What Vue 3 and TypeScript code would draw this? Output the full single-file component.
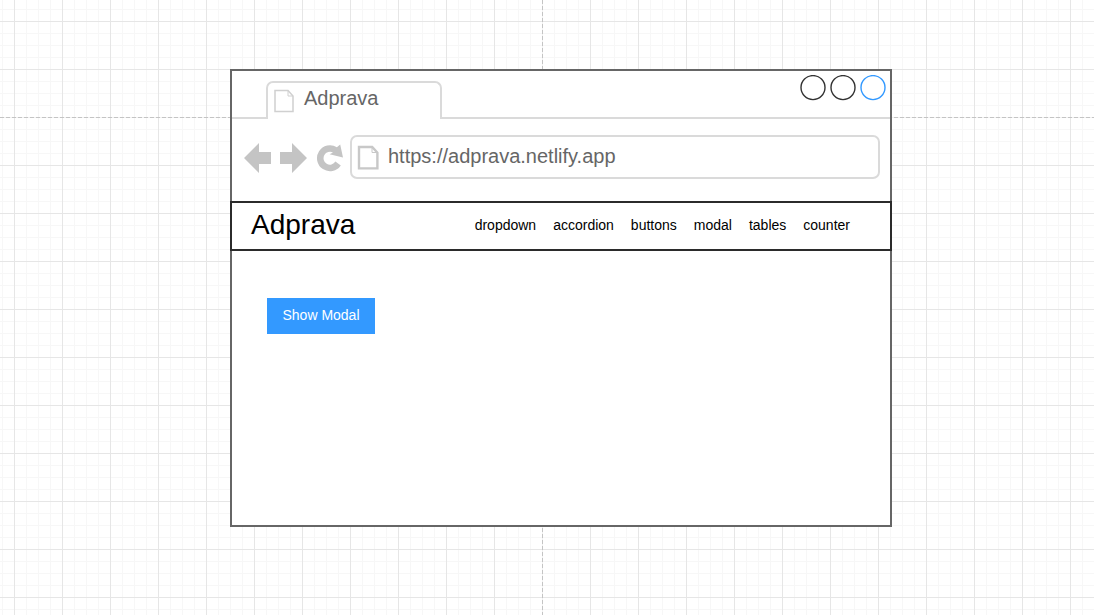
<script setup lang="ts">
import { ref } from 'vue'

interface NavLink {
  label: string
  href: string
}

const address = ref<string>('https://adprava.netlify.app')

const links: NavLink[] = ['dropdown', 'accordion', 'buttons', 'modal', 'tables', 'counter'].map(
  (label) => ({ label, href: `#${label}` }),
)

const controls = [
  { name: 'Minimize', accent: false },
  { name: 'Maximize', accent: false },
  { name: 'Close', accent: true },
]
</script>

<template>
  <div class="canvas">
    <div class="browser">
      <div class="tab-strip">
        <button class="tab" type="button">
          <svg class="tab-icon" viewBox="0 0 20 24" aria-hidden="true">
            <path d="M1 1.5H14L19 7V22.5H1Z" />
            <path class="fold" d="M14 1.5V7H19" />
          </svg>
          <span>Adprava</span>
        </button>
        <div class="controls">
          <button
            v-for="control in controls"
            :key="control.name"
            class="control"
            :class="{ accent: control.accent }"
            type="button"
            :aria-label="control.name"
          >
            <svg viewBox="0 0 26 26" aria-hidden="true">
              <circle cx="13" cy="12.6" r="12" />
            </svg>
          </button>
        </div>
      </div>

      <div class="toolbar">
        <button class="tool" type="button" aria-label="Back">
          <svg viewBox="0 0 27 30" aria-hidden="true">
            <path d="M0 15L15 0V9H27V21H15V30Z" />
          </svg>
        </button>
        <button class="tool" type="button" aria-label="Forward">
          <svg viewBox="0 0 27 30" aria-hidden="true">
            <path d="M27 15L12 0V9H0V21H12V30Z" />
          </svg>
        </button>
        <button class="tool" type="button" aria-label="Reload">
          <svg viewBox="0 0 27 30" aria-hidden="true">
            <path
              d="M20.9 4.2L24.2 1.4L27 14.4L13.6 11.2L17 9.6A6.4 6.4 0 1 0 19.4 18.6L24.8 22.4A13 13 0 1 1 20.9 4.2Z"
            />
          </svg>
        </button>
        <label class="address">
          <svg class="address-icon" viewBox="0 0 22 25" aria-hidden="true">
            <path d="M2 2H15.2L20.4 7.6V23.4H2Z" />
            <path class="fold" d="M15 2V7.5H20" />
          </svg>
          <input v-model="address" type="text" aria-label="Address" spellcheck="false" />
        </label>
      </div>

      <nav class="site-nav">
        <a class="brand" href="#">Adprava</a>
        <div class="links">
          <a v-for="link in links" :key="link.label" :href="link.href">{{ link.label }}</a>
        </div>
      </nav>

      <main class="content">
        <button class="primary" type="button">Show Modal</button>
      </main>
    </div>
  </div>
</template>

<style>
body {
  margin: 0;
}
</style>

<style scoped>
.canvas,
.canvas * {
  box-sizing: border-box;
}

.canvas {
  display: flex;
  min-height: 100vh;
  padding: 69px 202px 88px 230px;
  font-family: 'Liberation Sans', Arial, sans-serif;
  background-color: #fff;
  background-image:
    repeating-linear-gradient(90deg, #c4c4c4 0 4px, #f0f0f0 4px 6px),
    repeating-linear-gradient(180deg, #c4c4c4 0 4px, #f0f0f0 4px 6px),
    linear-gradient(90deg, #e6e6e6 1px, transparent 1px),
    linear-gradient(180deg, #e6e6e6 1px, transparent 1px),
    linear-gradient(90deg, #f7f7f7 1px, transparent 1px),
    linear-gradient(180deg, #f7f7f7 1px, transparent 1px);
  background-size:
    100% 1px,
    1px 100%,
    48px 48px,
    48px 48px,
    12px 12px,
    12px 12px;
  background-position:
    0 117px,
    542px 0,
    14px 21px,
    14px 21px,
    2px 9px,
    2px 9px;
  background-repeat: no-repeat, no-repeat, repeat, repeat, repeat, repeat;
}

button {
  margin: 0;
  padding: 0;
  border: 0;
  background: none;
  font: inherit;
}

svg {
  display: block;
}

.browser {
  display: flex;
  flex: 1;
  flex-direction: column;
  min-width: 0;
  border: 2px solid #666;
  background: #fff;
}

.tab-strip {
  display: flex;
  align-items: flex-end;
  justify-content: space-between;
  height: 48px;
  padding: 0 4px 0 34px;
  box-shadow: inset 0 -2px #dadada;
}

.tab {
  display: flex;
  gap: 10px;
  width: 176px;
  height: 38px;
  padding: 6px;
  border: 2px solid #dadada;
  border-bottom: 0;
  border-radius: 7px 7px 0 0;
  background: #fff;
  color: #666;
  font-size: 20px;
  line-height: 18px;
}

.tab-icon {
  width: 20px;
  height: 24px;
  fill: none;
  stroke: #d0d0d0;
  stroke-width: 1.5;
}

.tab-icon .fold {
  stroke-width: 1;
}

.controls {
  display: flex;
  align-self: flex-start;
  gap: 4px;
  padding-top: 4px;
}

.control svg {
  width: 26px;
  height: 26px;
  fill: none;
  stroke: #333;
  stroke-width: 1.4;
}

.control.accent svg {
  stroke: #3399ff;
}

.toolbar {
  display: flex;
  align-items: center;
  gap: 7px;
  padding: 16px 10px 22px 12px;
}

.tools {
  display: flex;
}

.tool {
  padding-top: 2px;
}

.tool + .tool {
  padding-left: 2px;
}

.tool svg {
  width: 27px;
  height: 30px;
  fill: #c4c4c4;
}

.address {
  display: flex;
  flex: 1;
  align-items: center;
  gap: 9px;
  height: 44px;
  padding: 0 5px;
  border: 2px solid #dadada;
  border-radius: 7px;
}

.address-icon {
  flex: none;
  width: 22px;
  height: 25px;
  fill: none;
  stroke: #c8c8c8;
  stroke-width: 2.4;
}

.address-icon .fold {
  stroke-width: 1;
}

.address input {
  flex: 1;
  min-width: 0;
  margin: 0;
  padding: 0 0 2px;
  border: 0;
  outline: 0;
  background: none;
  color: #666;
  font: inherit;
  font-size: 20px;
  line-height: 24px;
}

.site-nav {
  display: flex;
  align-items: center;
  justify-content: space-between;
  height: 50px;
  margin: 0 -2px;
  padding: 0 40px 2px 19px;
  border: 2px solid #2b2b2b;
  background: #fff;
}

.site-nav a {
  color: #000;
  text-decoration: none;
}

.site-nav .brand {
  font-size: 28px;
  line-height: 32px;
}

.links {
  display: flex;
  gap: 17px;
  font-size: 14px;
  line-height: 16px;
}

.content {
  padding: 47px 35px;
}

.primary {
  width: 108px;
  height: 36px;
  padding-bottom: 2px;
  background: #3399ff;
  color: #fff;
  font-size: 14px;
  line-height: 16px;
}
</style>
